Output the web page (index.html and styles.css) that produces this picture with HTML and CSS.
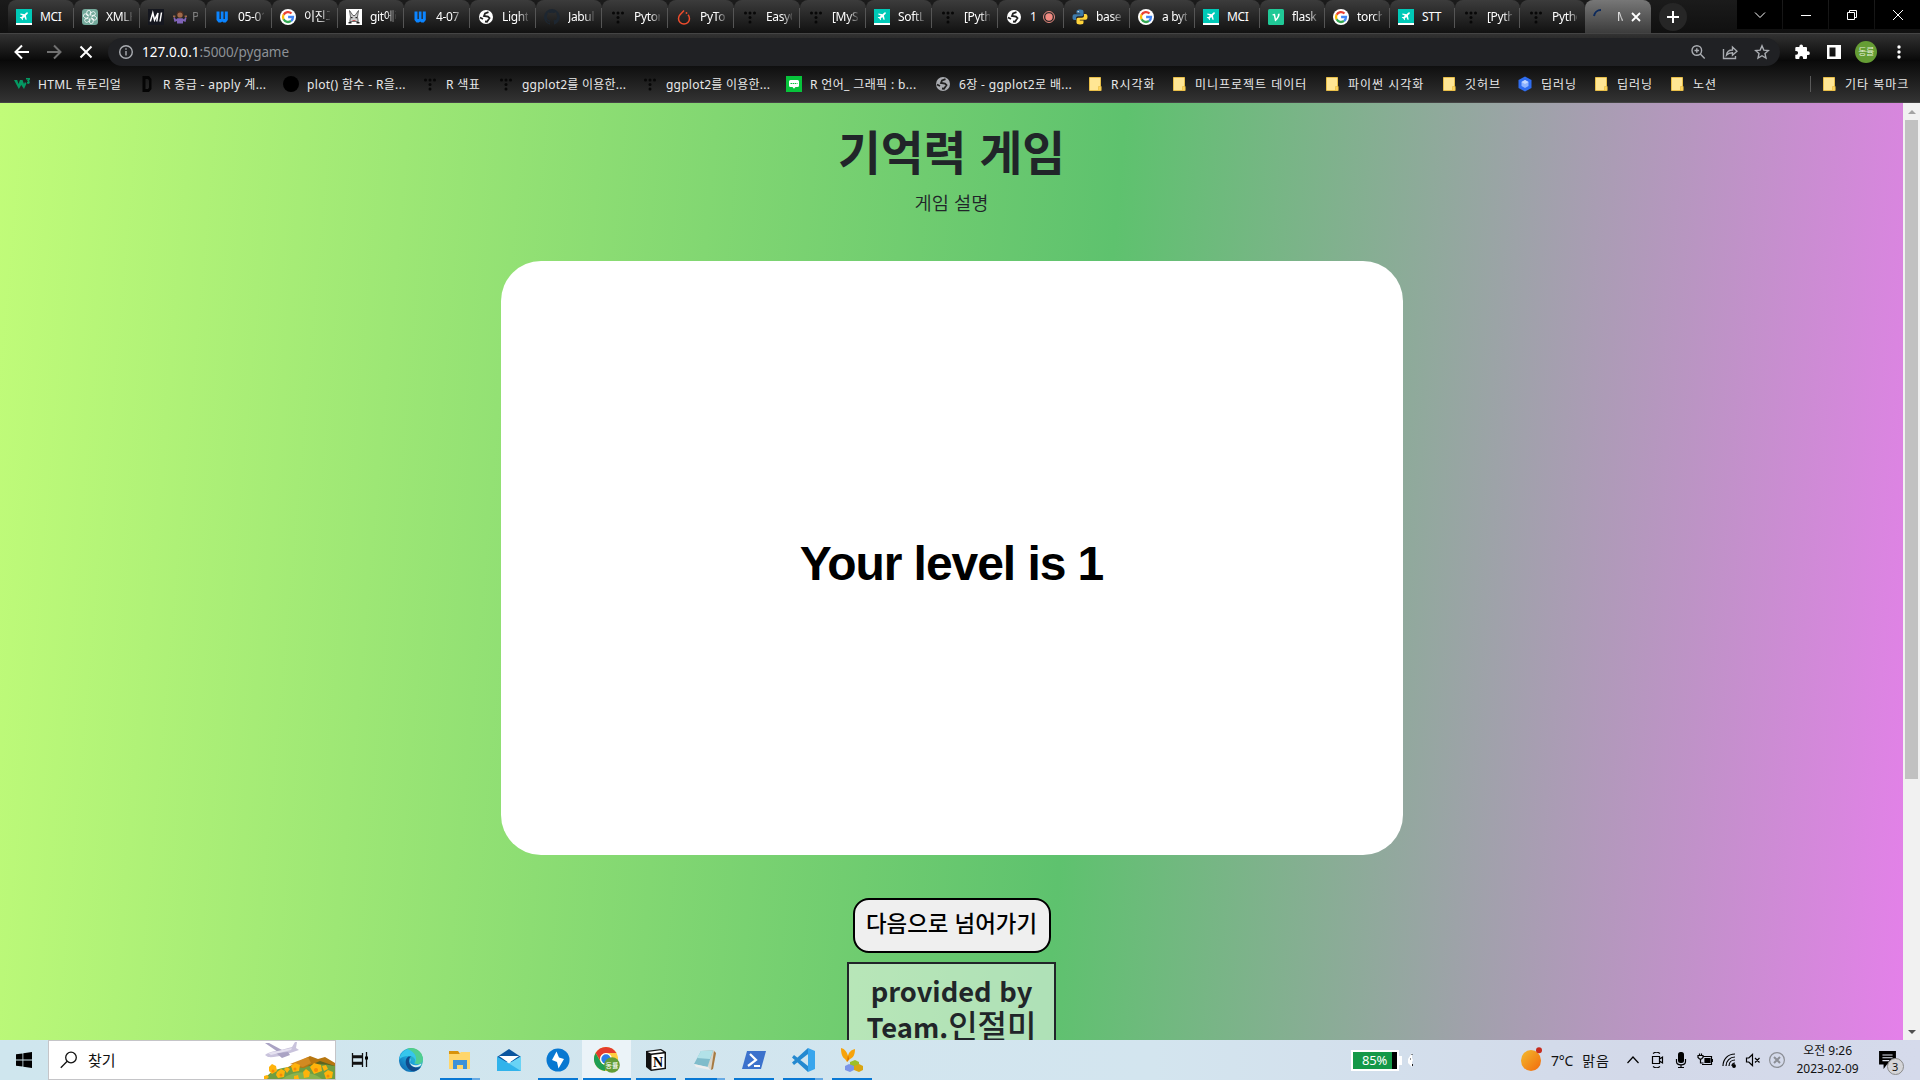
FILE: index.html
```html
<!DOCTYPE html>
<html lang="ko">
<head>
<meta charset="utf-8">
<title>Memory game</title>
<link rel="stylesheet" href="styles.css">
</head>
<body>
<svg class="defs" width="0" height="0">
<defs>
<linearGradient id="edgeg" x1="0" y1="1" x2="1" y2="0"><stop offset="0" stop-color="#0c59a4"/><stop offset=".5" stop-color="#1ea7dd"/><stop offset="1" stop-color="#61d95b"/></linearGradient>
<linearGradient id="sung" x1="0" y1="0" x2="1" y2="1"><stop offset="0" stop-color="#f3bb2c"/><stop offset="1" stop-color="#f2690d"/></linearGradient>
<symbol id="plane" viewBox="0 0 16 16"><path fill="#00c9b7" d="M0 0h16v14H0z"/><path fill="#fff" d="M0 14h16v2H0zM11.6 3.4c.6.5.2 1.200-.5 1.900L9.900 6.500l.8 4-.9.6L8.300 8 6.800 9.400l.2 1.300-.6.5-1-1.700-1.700-.9.600-.6 1.200.1L6.900 6.700 4 5.200l.6-.8 4 .8 1.200-1.200c.6-.6 1.400-1 1.800-.6z"/></symbol>
<symbol id="gpt" viewBox="0 0 16 16"><rect width="16" height="16" rx="3" fill="#74aa9c"/><g fill="none" stroke="#fff" stroke-width=".8"><path id="petal" d="M8 6.200V4.300l2.200-1.300a2 2 0 0 1 2.600 3L9.600 8"/><use href="#petal" transform="rotate(60 8 8)"/><use href="#petal" transform="rotate(120 8 8)"/><use href="#petal" transform="rotate(180 8 8)"/><use href="#petal" transform="rotate(240 8 8)"/><use href="#petal" transform="rotate(300 8 8)"/></g></symbol>
<symbol id="medi" viewBox="0 0 16 16"><path fill="#15171f" d="M0 0h16v16H0z"/><path fill="none" stroke="#fff" stroke-width="1.500" d="M2.300 12.500 4.800 4l1.700 7L10 4 8.800 12.500M13.500 3.500 12 12.500"/></symbol>
<symbol id="shrug" viewBox="0 0 14 14"><circle cx="7" cy="4.200" r="3.500" fill="#4b2d20"/><circle cx="7" cy="5" r="2.600" fill="#a06a4a"/><path fill="#8064b8" d="M3 9.500 1.500 7 .5 8l1 4L4 11v2.500h6V11l2.500 1 1-4-1-1L11 9.500 9.500 8.200h-5z"/><path d="M0 5.500h2.400v1.800H0zM11.600 5.500H14v1.800h-2.400z" fill="#a06a4a"/></symbol>
<symbol id="wiki" viewBox="0 0 16 16"><path fill="#0b84ff" d="M2.500 2.500h3V10h1.300V2.500h2.700V10h1.300V2.500h3V11l-2 2.500H9.500l-1.300-1-1.300 1H4.500l-2-2.500z"/></symbol>
<symbol id="google" viewBox="0 0 16 16"><circle cx="8" cy="8" r="8" fill="#fff"/><g fill="none" stroke-width="2.300"><path stroke="#ea4335" d="M11.500 4.500A5 5 0 0 0 3.600 5.700"/><path stroke="#fbbc05" d="M3.600 5.600a5 5 0 0 0 0 4.800"/><path stroke="#34a853" d="M3.600 10.300a5 5 0 0 0 7.500 1.600"/><path stroke="#4285f4" d="M8.100 8H13a5 5 0 0 1-1.900 4"/></g></symbol>
<symbol id="rabbit" viewBox="0 0 16 16"><path fill="#fff" d="M0 0h16v16H0z"/><path fill="#ccc" stroke="#333" stroke-width=".7" d="M4.500 8 3.500 1.500 7 6.500h2l3.500-5L11.500 8l.8 4.500H3.700z"/><path fill="#222" d="M5 8h1.500v1.300H5zM9.500 8H11v1.300H9.500zM2.500 13h3v1.500h-3zM10.500 13h3v1.500h-3z"/><path fill="#c33" d="M6.500 11h3v.8h-3z"/></symbol>
<symbol id="globe" viewBox="0 0 16 16"><circle cx="8" cy="8" r="7" fill="currentColor"/><path fill="none" stroke="#222" stroke-width="1.800" d="M10.500 3.200 7 4.500 6 7l4 .7 1.500 1.500-2.500 3.500L7 12.500M2 8.500l3 1.500"/></symbol>
<symbol id="github" viewBox="0 0 16 16"><path fill="#1d2630" d="M8 0a8 8 0 0 0-2.500 15.600c.4.1.5-.2.500-.4v-1.500c-2.200.5-2.700-1-2.700-1-.4-.9-.9-1.200-.9-1.200-.7-.5.1-.5.100-.5.800.1 1.200.8 1.200.8.700 1.300 1.900.9 2.300.7.100-.5.300-.9.500-1.100-1.800-.2-3.600-.9-3.600-4 0-.9.300-1.600.8-2.100-.1-.2-.4-1 .1-2.100 0 0 .7-.2 2.200.8a8 8 0 0 1 4 0c1.500-1 2.200-.8 2.200-.8.400 1.100.2 1.900.1 2.100.5.600.8 1.300.8 2.100 0 3.100-1.900 3.700-3.700 4 .3.200.6.700.6 1.500v2.200c0 .2.100.5.600.4A8 8 0 0 0 8 0z"/></symbol>
<symbol id="tdots" viewBox="0 0 16 16"><g fill="#070707"><circle cx="3.500" cy="4" r="1.500"/><circle cx="8" cy="4" r="1.500"/><circle cx="12.500" cy="4" r="1.500"/><circle cx="8" cy="8.500" r="1.500"/><circle cx="8" cy="13" r="1.500"/></g></symbol>
<symbol id="torch" viewBox="0 0 16 16"><path fill="none" stroke="#ee4c2c" stroke-width="1.500" d="M8 1.500 4 5.800a5.500 5.500 0 1 0 8 0"/><circle cx="10.500" cy="4" r=".9" fill="#ee4c2c"/></symbol>
<symbol id="rec" viewBox="0 0 14 14"><circle cx="7" cy="7" r="5.500" fill="none" stroke="#e6897f"/><circle cx="7" cy="7" r="3.700" fill="#f28b82"/></symbol>
<symbol id="python" viewBox="0 0 16 16"><path fill="#3e7bab" d="M8 .5c-3 0-3.500 1-3.500 2V4.500H8.200v.7H2.500C1 5.200.5 6.500.5 8.200S1 11 2.500 11H4V9.200c0-1.300.8-2 2-2h3.800c1 0 1.700-.7 1.700-1.700v-3C11.500 1.200 10.500.5 8 .5z"/><path fill="#ffd43b" d="M8 15.500c3 0 3.500-1 3.500-2v-2H7.800v-.7h5.700c1.500 0 2-1.300 2-3S15 5 13.500 5H12v1.800c0 1.300-.8 2-2 2H6.200c-1 0-1.700.7-1.700 1.700v3c0 1.300 1 2 3.500 2z"/><circle cx="6.200" cy="2.600" r=".7" fill="#fff"/></symbol>
<symbol id="velog" viewBox="0 0 16 16"><rect width="16" height="16" rx="1.500" fill="#20c997"/><path fill="#fff" d="M4.500 5.200 7 4.800l1 5c1.500-1.500 2.200-3.300 1.800-4.700l1.700-.5c.7 2.500-1.500 5.800-4.500 8L5.800 6.500l-1.300-.2z"/></symbol>
<symbol id="w3" viewBox="0 0 16 16"><path fill="#059862" d="M0 4h3.200l1.300 4L6 4h2.500L10 8l1-2 1.500 1.500L10 13 7.300 9 4.800 13zM12 2h4v1.500L15 5l1 1-1 2-2-.5V6h1l-1-1.500 1-1h-2z"/></symbol>
<symbol id="dd" viewBox="0 0 16 16"><path fill="#050505" fill-rule="evenodd" d="M3.500 0H10l2.500 3v10L10 16H3.500zM6.500 3v10H9l1-1.500v-7L9 3z"/></symbol>
<symbol id="disc" viewBox="0 0 16 16"><circle cx="8" cy="8" r="8" fill="#000"/></symbol>
<symbol id="line" viewBox="0 0 16 16"><path fill="#07c43b" d="M0 0h16v16H0z"/><path fill="#fff" d="M4.500 4h7a1.500 1.500 0 0 1 1.500 1.500v4a1.500 1.500 0 0 1-1.500 1.500H9.500L8 12.800 6.500 11h-2A1.500 1.500 0 0 1 3 9.500v-4A1.500 1.500 0 0 1 4.500 4z"/><path stroke="#07c43b" stroke-dasharray="1.500 .6" d="M4.500 7.500h7"/></symbol>
<symbol id="folder" viewBox="0 0 16 16"><path fill="#ffe694" stroke="#e8be48" d="M2.500 1.500h11v13h-11z"/><path fill="#ffd55b" stroke="#e8be48" stroke-width=".7" d="M11.500 10.500h2.700v4h-2.700z"/></symbol>
<symbol id="cube" viewBox="0 0 16 16"><path fill="#2f6df0" d="M8 .5 14.500 4v8L8 15.500 1.500 12V4z"/><path fill="#8fb4ff" d="m8 4 3.500 2v4L8 12l-3.500-2V6z"/><path fill="#c4d8ff" d="m8 4 3.500 2L8 8 4.500 6z"/></symbol>
</defs></svg>

<header class="browser">
  <div class="tabstrip">
    <div class="tab"><svg><use href="#plane"/></svg><span>MCI</span></div>
    <div class="tab"><svg><use href="#gpt"/></svg><span>XMLH</span></div>
    <div class="tab"><svg><use href="#medi"/></svg><svg class="shrug"><use href="#shrug"/></svg><span class="dim">P</span></div>
    <div class="tab"><svg><use href="#wiki"/></svg><span>05-01</span></div>
    <div class="tab"><svg><use href="#google"/></svg><span>이진고</span></div>
    <div class="tab"><svg><use href="#rabbit"/></svg><span>git에러</span></div>
    <div class="tab"><svg><use href="#wiki"/></svg><span>4-07</span></div>
    <div class="tab"><svg class="light"><use href="#globe"/></svg><span>Light</span></div>
    <div class="tab"><svg><use href="#github"/></svg><span>Jabul</span></div>
    <div class="tab"><svg><use href="#tdots"/></svg><span>Pytor</span></div>
    <div class="tab"><svg><use href="#torch"/></svg><span>PyTo</span></div>
    <div class="tab"><svg><use href="#tdots"/></svg><span>EasyO</span></div>
    <div class="tab"><svg><use href="#tdots"/></svg><span>[MyS</span></div>
    <div class="tab"><svg><use href="#plane"/></svg><span>SoftL</span></div>
    <div class="tab"><svg><use href="#tdots"/></svg><span>[Pyth</span></div>
    <div class="tab"><svg class="light"><use href="#globe"/></svg><span class="one">1</span><svg class="rec"><use href="#rec"/></svg></div>
    <div class="tab"><svg><use href="#python"/></svg><span>base</span></div>
    <div class="tab narrow"><svg><use href="#google"/></svg><span>a byt</span></div>
    <div class="tab narrow"><svg><use href="#plane"/></svg><span>MCI</span></div>
    <div class="tab narrow"><svg><use href="#velog"/></svg><span>flask</span></div>
    <div class="tab narrow"><svg><use href="#google"/></svg><span>torch</span></div>
    <div class="tab narrow"><svg><use href="#plane"/></svg><span>STT</span></div>
    <div class="tab narrow"><svg><use href="#tdots"/></svg><span>[Pyth</span></div>
    <div class="tab narrow"><svg><use href="#tdots"/></svg><span>Pytho</span></div>
    <div class="tab active"><svg viewBox="0 0 16 16"><path d="M1 7a7 7 0 0 1 7-6" fill="none" stroke="#0d2a5c" stroke-width="2"/></svg><span>M</span><svg class="close" viewBox="0 0 10 10"><path d="M1 1l8 8M9 1 1 9" stroke="#fff" stroke-width="1.800"/></svg></div>
    <div class="newtab"><svg width="12" height="12" viewBox="0 0 12 12"><path d="M6 0v12M0 6h12" stroke="#fff" stroke-width="2"/></svg></div>
    <div class="winbtns">
      <div><svg viewBox="0 0 12 12"><path d="m1 3.500 5 5 5-5"/></svg></div>
      <div><svg viewBox="0 0 12 12"><path d="M1 6.500h10"/></svg></div>
      <div><svg viewBox="0 0 12 12"><path d="M1.500 3.500h7v7h-7zM3.500 3.500v-2h7v7h-2"/></svg></div>
      <div><svg viewBox="0 0 12 12"><path d="m1 1 10 10M11 1 1 11"/></svg></div>
    </div>
  </div>

  <div class="toolbar">
    <svg class="nav" viewBox="0 0 16 16"><path d="M15 8H2M8 1.500 1.500 8 8 14.500" stroke="#fff"/></svg>
    <svg class="nav" viewBox="0 0 16 16"><path d="M1 8h13M8 1.500 14.500 8 8 14.500" stroke="#717171"/></svg>
    <svg class="nav stop" viewBox="0 0 16 16"><path d="m2.500 2.500 11 11M13.500 2.500l-11 11" stroke="#fff"/></svg>
    <div class="omnibox">
      <svg viewBox="0 0 16 16"><circle cx="8" cy="8" r="6.300"/><path d="M8 7v4.500M8 4.200v1.600"/></svg>
      <span class="url"><b>127.0.0.1</b>:5000/pygame</span>
      <svg viewBox="0 0 16 16"><circle cx="6.800" cy="6.500" r="4.800"/><path d="m10.300 10 4.400 4.400M4.500 6.500h4.600M6.800 4.200v4.600"/></svg>
      <svg viewBox="0 0 16 16"><path d="M1.500 5v9.500h12V12M4.500 11c.4-3.500 2.500-5 6-5V3l4.500 4.200-4.500 4V8.700c-2.800 0-4.500.6-6 2.300z"/></svg>
      <svg viewBox="0 0 16 16"><path d="m8 1.800 1.800 4.300 4.700.4-3.500 3.100 1 4.500-4-2.400-4 2.400 1-4.500-3.500-3.100 4.700-.4z"/></svg>
    </div>
    <svg class="ext" viewBox="0 0 16 16"><path fill="#fff" d="M14 7.300h-1V4a1 1 0 0 0-1-1H9v-.8a1.800 1.800 0 0 0-3.600 0V3H2.300a1 1 0 0 0-1 1v2.900h.9a1.900 1.900 0 0 1 0 3.800h-.9V14a1 1 0 0 0 1 1h3v-1a1.900 1.900 0 0 1 3.800 0v1H12a1 1 0 0 0 1-1v-3h1a1.850 1.850 0 0 0 0-3.700z"/></svg>
    <svg class="panel" viewBox="0 0 16 16"><path fill="#fff" fill-rule="evenodd" d="M1 1h14v14H1zM3.500 3.500v9H9.500v-9z"/></svg>
    <div class="avatar">동률</div>
    <svg class="more" viewBox="0 0 16 16"><g fill="#fff"><circle cx="8" cy="3" r="1.700"/><circle cx="8" cy="8" r="1.700"/><circle cx="8" cy="13" r="1.700"/></g></svg>
  </div>

  <nav class="bookmarks">
    <div><svg><use href="#w3"/></svg>HTML 튜토리얼</div>
    <div><svg><use href="#dd"/></svg>R 중급 - apply 계...</div>
    <div><svg><use href="#disc"/></svg>plot() 함수 - R을...</div>
    <div><svg><use href="#tdots"/></svg>R 색표</div>
    <div class="tight"><svg><use href="#tdots"/></svg>ggplot2를 이용한...</div>
    <div class="tight"><svg><use href="#tdots"/></svg>ggplot2를 이용한...</div>
    <div><svg><use href="#line"/></svg>R 언어_ 그래픽 : b...</div>
    <div><svg class="grey"><use href="#globe"/></svg>6장 - ggplot2로 배...</div>
    <div class="wide"><svg><use href="#folder"/></svg>R시각화</div>
    <div class="wide"><svg><use href="#folder"/></svg>미니프로젝트 데이터</div>
    <div class="wide"><svg><use href="#folder"/></svg>파이썬 시각화</div>
    <div class="wide"><svg><use href="#folder"/></svg>깃허브</div>
    <div class="wide"><svg><use href="#cube"/></svg>딥러닝</div>
    <div class="wide"><svg><use href="#folder"/></svg>딥러닝</div>
    <div class="wide"><svg><use href="#folder"/></svg>노션</div>
    <div class="wide other"><svg><use href="#folder"/></svg>기타 북마크</div>
  </nav>
</header>

<div class="viewport">
  <main class="page">
    <h1>기억력 게임</h1>
    <p class="desc">게임 설명</p>
    <section class="game">Your level is 1</section>
    <button class="next">다음으로 넘어가기</button>
    <footer class="credit">provided by<br>Team.<span>인절미</span></footer>
  </main>
  <div class="scrollbar"><i class="up"></i><div class="thumb"></div><i class="down"></i></div>
</div>

<div class="taskbar">
  <div class="start"><svg width="16" height="16" viewBox="0 0 16 16"><path d="M0 2.300 6.500 1.400v6.200H0zM7.300 1.300 16 0v7.600H7.300zM0 8.400h6.500v6.200L0 13.700zM7.300 8.400H16V16l-8.700-1.300z"/></svg></div>
  <div class="search">
    <svg width="18" height="18" viewBox="0 0 18 18"><circle cx="11" cy="6.500" r="5.300" fill="none" stroke="#111" stroke-width="1.300"/><path d="M7.200 10.300.8 16.700" stroke="#111" stroke-width="1.300"/></svg>
    <span>찾기</span>
    <svg class="scene" width="71" height="38" viewBox="0 0 71 38">
      <path fill="#b7760f" d="M20 28 34 21l12-6 8 3 7-2 10 6v17H15z"/><path fill="#d28a22" d="m26 23 18-7 3 6-8 4z"/><path fill="#5d6420" d="M44 25 56 20l15 5v14H40z"/><path fill="#6f9e42" d="M0 38c12-14 26-12 40-11 12-6 22-3 31-2v13z"/><path fill="#88b34f" d="M18 38c12-9 28-9 40 0z"/>
      <g fill="#ffb30b"><path d="m5 26 3-3 4 2 1 5-5 3-3-3z"/><path d="m13 31 4-3 4 2-1 6-6 1-2-3z"/><path d="m27 25 4-3 5 2-1 6-6 1z"/><path d="m39 31 3-3 4 3-1 5-5 1z"/><path d="m46 26 4-4 7 2 1 6-8 3z"/><path d="m60 32 4-3 5 2-1 6-6 1zM0 35l3-1 2 2-2 2H0zM20 28l3-2 3 2-3 4zM30 35l4-1 1 4h-5zM58 25l4-1 2 4-4 2z"/></g><g fill="#f58a07"><circle cx="9" cy="30" r="1.500"/><circle cx="17" cy="34" r="1.500"/><circle cx="31" cy="28" r="1.500"/><circle cx="52" cy="29" r="2"/><circle cx="64" cy="35" r="1.500"/></g>
      <path fill="#c9c3dc" d="M1 14c4-4 14-4 27-8l3-5h2l-1 6 3 2-3 1C24 13 12 17 4 16z"/><path fill="#aaa3c4" d="M1 2h4l13 7-4 2zM12 12l12-1 2 3-8 3z"/><path fill="#e5e1f0" d="M4 12 28 7l-1 2-20 5z"/>
    </svg>
  </div>
  <div class="app"><svg viewBox="0 0 24 24"><path fill="none" stroke="#111" stroke-width="1.300" d="M4.500 5v3h10V5M4.500 19v-3h10v3M4.500 9.500h10v5h-10zM18.500 4v15"/><path d="M17 8.500h3v3h-3z"/></svg></div>
  <div class="app edge"><svg viewBox="0 0 24 24"><circle cx="12" cy="12" r="12" fill="url(#edgeg)"/><path fill="#36c6ed" d="M.6 9A12 12 0 0 1 23.900 11c.2 4-4 6-8.500 4.500 2.500-4-1-8-6-7.500C5 8 2 9 .2 12z"/><path fill="#57d07b" d="M12 0a12 12 0 0 1 11.900 11c.2 4-4 6-8.500 4.500C19 11 17 4 8 .7z" opacity=".8"/><path fill="#114a8b" d="M9.500 8.500C4 12 7 22.500 15 23.500c4-1 6-3 7-5-5 2.500-12 0-12-5.500 0-2.500 1-4 2.500-4.500z"/><path fill="#d9ebf0" d="M12 10.500c-3 3 0 8 7 6.500 2-.6 3-1.500 3.500-1-1 2-2 2.500-4 3-6 1-9-4-6.500-8.500z"/></svg></div>
  <div class="app open twin"><svg viewBox="0 0 24 24"><path fill="#d8930b" d="M1 3h9l1.500 2H22v5H1z"/><path fill="#ffd66b" d="M1 6h10l2-2h9v17H1z"/><path fill="#3d92d8" d="M5 12h14v9h-4v-4H9v4H5z"/></svg></div>
  <div class="app"><svg viewBox="0 0 24 24"><path fill="#0b559f" d="M0 9 12 1l12 8v5H0z"/><path fill="#fff" d="M2 8h20l-10 7z"/><path fill="#31b3eb" d="m0 8.500 12 7 12-7V23H0z"/><path fill="#69d3f5" d="m12 15.500 12-7V23z"/></svg></div>
  <div class="app open"><svg viewBox="0 0 24 24"><circle cx="12" cy="12" r="11.500" fill="#0878d1"/><path fill="#fff" d="M10.500 3.500 6 12l5 2 1.500 6.500L18 11l-5-1.500z"/></svg></div>
  <div class="app open focus"><svg viewBox="0 0 26 26"><circle cx="12" cy="12" r="12" fill="#ffcd40"/><path fill="#e33b2e" d="M12 0a12 12 0 0 1 10.400 6H12a6 6 0 0 0-5.500 8L1.600 6A12 12 0 0 1 12 0z"/><path fill="#1e9e54" d="M1.600 6 7 15.500a6 6 0 0 0 6.500 2.200L11 24A12 12 0 0 1 1.600 6z"/><circle cx="12" cy="12" r="6" fill="#fff"/><circle cx="12" cy="12" r="4.700" fill="#2b7de9"/><circle cx="18" cy="18" r="7.800" fill="#639d37"/><text x="18" y="21" text-anchor="middle" class="mini">동률</text></svg></div>
  <div class="app open"><svg viewBox="0 0 24 24"><path d="M2 3 17 1l5 3v17l-15 2-5-4z" fill="#111"/><path fill="#fff" d="M3.500 4 16.500 2.300 19.500 4 7 5.500z"/><path fill="#fff" d="M7.500 7 20.500 5.500v14.300l-13 1.600z"/><text x="14" y="18.500" text-anchor="middle" class="notion">N</text></svg></div>
  <div class="app open twin"><svg viewBox="0 0 24 24"><path fill="#d9d6cb" d="m8 3 13-1 2 3-3 16-3 1z"/><path fill="#a67a42" d="m21 3 2 2-3 16-2 1z"/><path fill="#80bccb" d="M8 3 20 2.500 14.500 19 1 16z"/><path fill="#b2e2e8" d="m8 3 12-.5L17 11 4 10z"/><path fill="#eee" d="m1 16 13.500 3 3 3L3 19z"/></svg></div>
  <div class="app open"><svg viewBox="0 0 24 24"><path fill="#3c72cc" d="M5 3h19l-5 18H0z"/><path fill="none" stroke="#fff" stroke-width="2.200" d="m8 6 6 6-8 6M12 18h6"/></svg></div>
  <div class="app open twin"><svg viewBox="0 0 24 24"><path fill="#2489d0" d="M17 0v24L1 9.500 3 7l14 11V6L3 17l-2-2.500z"/><path fill="#39a6ed" d="m17 0 7 3v18l-7 3z"/></svg></div>
  <div class="app open"><svg viewBox="0 0 24 24"><path fill="#f7a30a" d="M1 0c4 1 6 4 7 8 1-4 3-6 7-7 0 6-2 9-5 10l-3 3-2-3C2 9 1 5 1 0z"/><path fill="#d86b00" d="m8 7 1 4-2 3z"/><path fill="#9dbf28" d="m10 14 5-2 4 2v4l-4 2-5-2z"/><path fill="#7b95e8" d="m5 18 4-2 5 2v4l-4 2-5-2z"/><path fill="#d9a511" d="m14 18 5-2 4 2v4l-4 2-5-2z"/></svg></div>

  <div class="battery"><div>85%</div></div>
  <svg class="plug" width="8" height="16" viewBox="0 0 8 16"><path fill="#fff" d="M5 1v5l1 2-1 2v5L1 11V7z"/><path stroke="#222" d="M3.500 6.500v1M5.500 12v2M5 2v1"/></svg>
  <div class="weather"><svg width="21" height="24" viewBox="0 0 21 24"><ellipse cx="10" cy="13.500" rx="10" ry="10.500" fill="url(#sung)"/><circle cx="18" cy="3.200" r="3" fill="#c62b1d"/></svg><span>7°C</span><span class="sky">맑음</span></div>
  <div class="tray">
    <svg viewBox="0 0 16 16"><path d="m2.500 11 5.500-6 5.500 6"/></svg>
    <svg viewBox="0 0 16 16"><path d="M3.500 4.500h7v7h-7zM10.500 7l3-2v6l-3-2M4 1.500c2-1.500 5-1.500 7 0M4 14.500c2 1.500 5 1.500 7 0"/></svg>
    <svg viewBox="0 0 16 16"><rect x="5" y="0" width="6" height="11" rx="2.500" fill="#000" stroke="none"/><path d="M3.500 7v2.500c0 4.500 9 4.500 9 0V7M8 13v2.500M5 15.500h6"/></svg>
    <svg viewBox="0 0 16 16"><path d="M6 4.500h8.500v8H5M15.500 7v3M1 3.500h5v2L4.500 7H2.500L1 5.500zM2.500 1.500v2M4.500 1.500v2M3.500 7v4h3"/><path d="M8 6.500h5v4H8z" fill="#000"/></svg>
    <svg viewBox="0 0 16 16"><path d="M2 14C2 7 7 2 14 2M5 14c0-5 4-9 9-9M8 14c0-3.500 2.500-6 6-6M11 14c0-2 1-3 3-3"/><circle cx="13" cy="14" r="1.300" fill="#000"/></svg>
    <svg viewBox="0 0 16 16"><path d="M1.500 6h2.300L7.500 2.500v11L3.800 10H1.500zM10 6l4.500 4.500M14.500 6 10 10.500"/></svg>
    <svg class="off" viewBox="0 0 16 16"><circle cx="8" cy="8" r="7.400"/><path d="m5 5 6 6M11 5l-6 6" stroke-width="2"/></svg>
  </div>
  <div class="clock"><span>오전 9:26</span><span>2023-02-09</span></div>
  <div class="notice"><svg width="17" height="18" viewBox="0 0 15 16"><path d="M0 0h15v12H7l-3 4v-4H0z"/><path stroke="#dde2ee" d="M3 3.500h9M3 6h9M3 8.500h6"/></svg><em>3</em></div>
</div>
</body>
</html>
```

FILE: styles.css
```css
* { box-sizing: border-box; }
body {
  margin: 0;
  width: 1920px;
  height: 1080px;
  overflow: hidden;
  display: flex;
  flex-direction: column;
  background: #000;
  font-family: "Noto Sans", "Noto Sans CJK KR", sans-serif;
  font-size: 12px;
}
svg { flex: none; display: block; }
.defs { position: absolute; }

/* browser frame */
.browser { height: 103px; flex: none; color: #fff; border-bottom: 1px solid #444; background: #101010; }
.tabstrip { height: 33px; display: flex; padding-left: 8px; background: linear-gradient(#1b1b1b, #101010); }
.tab {
  width: 66px; height: 33px; padding: 1px 8px 0; overflow: hidden;
  display: flex; align-items: center; gap: 8px;
  border-radius: 8px 8px 0 0;
  background: linear-gradient(#555, #555) right 8px / 1px 20px no-repeat, linear-gradient(#3c3c3c, #111);
}
.tab:nth-child(24) { background: linear-gradient(#3c3c3c, #111); }
.tab.narrow { width: 65px; }
.tab svg { width: 16px; height: 16px; }
.tab .light { color: #fff; }
.tab span {
  flex: 1; min-width: 0; overflow: hidden; white-space: nowrap; letter-spacing: -.35px; line-height: 17px; padding-bottom: 1px;
  -webkit-mask-image: linear-gradient(90deg, #000 16px, transparent 28px);
  mask-image: linear-gradient(90deg, #000 16px, transparent 28px);
}
.tab:nth-child(1) span, .tab:nth-child(19) span, .tab:nth-child(22) span { -webkit-mask-image: none; mask-image: none; }
.tab .shrug { width: 14px; height: 14px; margin-left: 1px; }
.tab .dim { opacity: .4; margin-left: -3px; }
.tab .one { flex: none; width: 6px; -webkit-mask-image: none; mask-image: none; }
.tab .rec { width: 14px; height: 14px; margin-left: -2px; }
.tab.active { background: linear-gradient(#777, #3c3c3c); }
.tab.active span { flex: none; width: 6px; -webkit-mask-image: linear-gradient(90deg, #fff, #0008); mask-image: linear-gradient(90deg, #fff, #0008); }
.tab.active .close { width: 10px; height: 10px; }
.newtab { width: 28px; height: 28px; margin: 3px 0 0 8px; border-radius: 50%; background: #262626; display: grid; place-items: center; }
.winbtns { margin-left: auto; width: 183px; height: 29px; display: flex; gap: 1px; }
.winbtns div { flex: 1; background: #000; display: grid; place-items: center; }
.winbtns svg { width: 12px; height: 12px; fill: none; stroke: #fff; stroke-width: 1; }

.toolbar { height: 28px; display: flex; align-items: flex-start; padding-left: 14px; border-top: 1px solid #444; background: linear-gradient(#323232, #080808); }
.toolbar > svg { width: 16px; height: 16px; margin-top: 10px; }
.toolbar .nav { fill: none; stroke-width: 2; margin-right: 16px; }
.toolbar .stop { margin: 10px 14px 0 0; }
.omnibox { position: relative; margin-top: 4px; width: 1672px; height: 28px; border-radius: 14px; background: #202124; display: flex; align-items: center; padding: 0 10px; }
.omnibox svg { width: 16px; height: 16px; fill: none; stroke: #aaadb2; stroke-width: 1.400; margin-left: 16px; }
.omnibox svg:first-child { margin-left: 0; }
.url { flex: 1; margin-left: 8px; font-size: 13.500px; color: #8d9196; letter-spacing: -.1px; }
.url b { font-weight: 400; color: #fff; letter-spacing: .04px; }
.toolbar .ext { margin-left: 14px; }
.toolbar .panel { margin-left: 16px; }
.avatar { width: 22px; height: 22px; margin: 7px 0 0 13px; border-radius: 50%; background: #659d34; font-size: 9px; line-height: 21px; text-align: center; letter-spacing: -.5px; color: #e0edd5; }
.toolbar .more { margin-left: 14px; }

.bookmarks {
  height: 41px; padding: 4px 8px 0 14px; color: #e8e8e8;
  display: grid; align-items: center;
  grid-template-columns: 125px 144px 139px 76px 144px 144px 149px 152px 84px 153px 117px 76px 76px 76px 141px 1fr;
  background: linear-gradient(#0a0a0a, #333);
}
.bookmarks div { display: flex; align-items: center; gap: 8px; white-space: nowrap; height: 16px; letter-spacing: .36px; }
.bookmarks .tight { letter-spacing: .24px; }
.bookmarks .wide { letter-spacing: .98px; }
.bookmarks svg { width: 16px; height: 16px; }
.bookmarks .grey { color: #a9abb0; }
.bookmarks .other { border-left: 1px solid #5a5a5a; padding-left: 10px; }

/* page content */
.viewport { height: 937px; flex: none; display: flex; }
.page {
  width: 1903px; overflow: hidden; padding-top: 12px;
  display: flex; flex-direction: column; align-items: center;
  color: #212529; font-family: "Noto Sans CJK KR", sans-serif;
  background: linear-gradient(95deg, #c1fc79, #5ec26e 1122px, #e87eed 2000px);
}
h1 { margin: 0; font-size: 46.500px; line-height: 70px; font-weight: 700; }
.desc { margin: 3px 0 0; font-size: 18.700px; line-height: 28px; font-weight: 350; }
.game {
  width: 902px; height: 594px; margin-top: 45px; flex: none; padding-top: 11px;
  border-radius: 40px; background: #fff; color: #000;
  display: grid; place-items: center;
  font: 700 48px "Liberation Sans", sans-serif; letter-spacing: -1.050px;
}
.next {
  width: 198px; height: 55px; flex: none; margin-top: 43px; padding: 0 0 7px;
  border: 2px solid #000; border-radius: 16px; background: #efefef; color: #000;
  font: 500 22.400px "Noto Sans CJK KR", sans-serif; white-space: nowrap;
}
.credit { width: 209px; height: 110px; flex: none; margin-top: 9px; padding-top: 9px; border: 2px solid #212529; background: rgba(255, 255, 255, .5); text-align: center; font-size: 27.300px; font-weight: 700; line-height: 35px; }
.credit span { font-size: 32px; font-weight: 500; line-height: 1; }
.scrollbar { width: 17px; background: #f1f1f1; display: flex; flex-direction: column; align-items: center; }
.scrollbar i { border: 4px solid transparent; }
.scrollbar .up { margin: 3px 0 6px; border-bottom-color: #a3a3a3; }
.scrollbar .down { margin: auto 0 2px; border-top-color: #505050; }
.scrollbar .thumb { width: 13px; height: 659px; background: #c1c1c1; }

/* taskbar */
.taskbar { height: 40px; flex: none; display: flex; align-items: center; color: #111; background: linear-gradient(90deg, #cfe6ee, #d3e5ef 60%, #d3d9e9 85%, #d5daeb); }
.start { width: 48px; display: grid; place-items: center; }
.search { width: 288px; height: 40px; margin-right: -1px; border: 1px solid #c5c5c8; background: #fff; display: flex; align-items: center; padding-left: 11px; }
.search span { flex: 1; margin-left: 10px; padding-bottom: 2px; font-size: 15px; }
.search .scene { align-self: flex-end; }
.app { width: 49px; height: 40px; display: grid; place-items: center; }
.app.edge { margin-left: 2px; }
.app svg { width: 24px; height: 24px; }
.app.open { background: linear-gradient(#0878d4, #0878d4) center bottom / 40px 2px no-repeat; }
.app.twin { background: linear-gradient(90deg, #0878d4 32px, #67aae4 32px) center bottom / 40px 2px no-repeat; }
.app.focus { background: linear-gradient(#0878d4, #0878d4) center bottom / 48px 2px no-repeat, #ebf3f8; }
.app.focus svg { width: 26px; height: 26px; }
.mini { font-size: 7px; fill: #fff; }
.notion { font: 700 14px "Liberation Serif", serif; }
.battery { position: relative; margin-left: 475px; width: 48px; height: 21px; border: 2px solid #fff; background: #000; }
.battery div { width: 39px; height: 17px; background: #149848; color: #fff; font-size: 13px; line-height: 17px; text-align: center; padding-left: 4px; letter-spacing: -.2px; }
.battery::after { content: ""; position: absolute; left: 46px; top: 4px; width: 3px; height: 9px; background: #fff; }
.plug { margin-left: 8px; }
.weather { margin-left: 106px; display: flex; align-items: center; gap: 9px; font-size: 14px; letter-spacing: -.2px; }
.weather svg { margin-top: -3px; }
.weather .sky { letter-spacing: .8px; }
.tray { margin-left: 15px; display: flex; gap: 8px; }
.tray svg { width: 16px; height: 16px; fill: none; stroke: #000; stroke-width: 1.200; }
.tray .off { stroke: #8c8f96; }
.clock { width: 76px; margin-left: 5px; display: flex; flex-direction: column; text-align: center; line-height: 18px; font-size: 12px; letter-spacing: -.05px; white-space: nowrap; }
.notice { position: relative; margin-left: 13px; height: 18px; }
.notice em { position: absolute; left: 8px; top: 7px; width: 17px; height: 17px; border: 1px solid #8a8a8a; border-radius: 50%; background: #d5d5d8; font-style: normal; font-size: 11px; line-height: 15px; text-align: center; }
```
